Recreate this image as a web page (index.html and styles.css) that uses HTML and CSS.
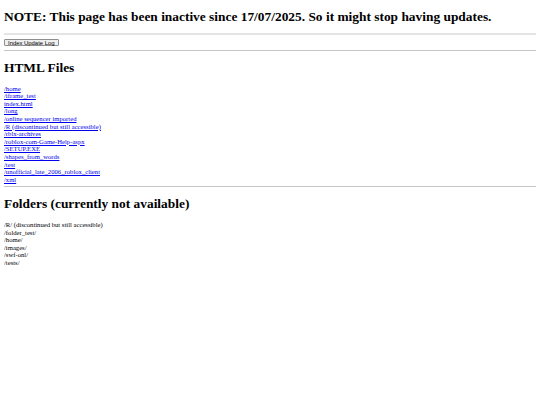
FILE: index.html
```html
<!DOCTYPE html>
<html lang="en">
<head>
<meta charset="utf-8">
<title>Index</title>
<link rel="stylesheet" href="styles.css">
</head>
<body>
<h1 class="note">NOTE: This page has been inactive since 17/07/2025. So it might stop having updates.</h1>
<hr class="rule rule-light">
<button class="log-btn" type="button">Index Update Log</button>
<hr class="rule">
<h2 class="section-title">HTML Files</h2>
<div class="list">
<a href="#">/home</a>
<a href="#">/iframe_test</a>
<a href="#">index.html</a>
<a href="#">/long</a>
<a href="#">/online sequencer imported</a>
<a href="#">/R (discontinued but still accessible)</a>
<a href="#">/rblx-archives</a>
<a href="#">/roblox-com-Game-Help-aspx</a>
<a href="#">/SETUP.EXE</a>
<a href="#">/shapes_from_words</a>
<a href="#">/test</a>
<a href="#">/unofficial_late_2006_roblox_client</a>
<a href="#">/xml</a>
</div>
<hr class="rule rule-tight">
<h2 class="section-title">Folders (currently not available)</h2>
<div class="list">
<span>/R/ (discontinued but still accessible)</span>
<span>/folder_test/</span>
<span>/home/</span>
<span>/images/</span>
<span>/swf-onl/</span>
<span>/tests/</span>
</div>
</body>
</html>
```

FILE: styles.css
```css
html {
  background: #fff;
}
body {
  margin: 4px;
  font-family: "Liberation Serif", "Times New Roman", serif;
  font-size: 6.67px;
  color: #000;
}
.note,
.section-title {
  font-size: 13.4px;
  font-weight: bold;
  line-height: 14px;
}
.note {
  margin: 5.5px 0 9.5px;
}
.rule {
  border: 0;
  border-top: 1px solid #c6c6c6;
  height: 0;
  margin: 4px 0;
}
.rule-light {
  border-top: 2px solid #e4e4e4;
}
.rule-tight {
  margin: 3px 0;
}
.log-btn {
  display: block;
  font-family: "Liberation Sans", Arial, sans-serif;
  font-size: 5.9px;
  line-height: 4px;
  white-space: nowrap;
  padding: 0.5px 3px;
  margin: 0;
  color: #000;
  background: #efefef;
  border: 1px solid #8f8f8f;
  border-radius: 1px;
}
.section-title {
  margin: 9.6px 0 10px;
}
.list {
  display: flex;
  flex-direction: column;
  align-items: flex-start;
  line-height: 7.6px;
}
.list a {
  color: #0000ee;
  text-decoration: underline;
}
```
